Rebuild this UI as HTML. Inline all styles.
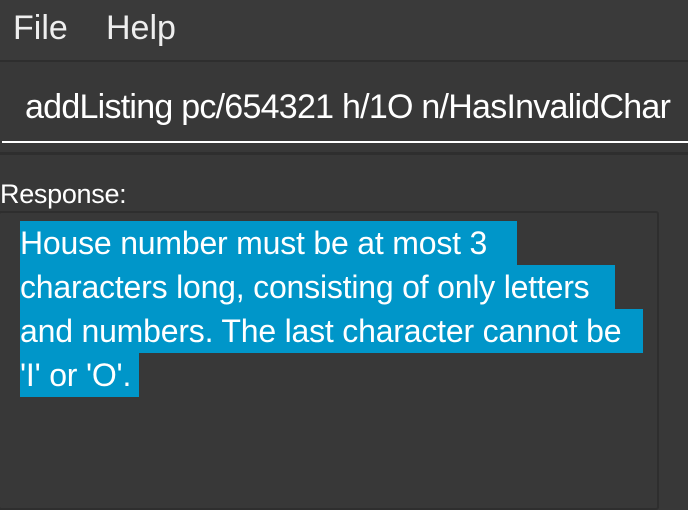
<!DOCTYPE html>
<html><head><style>
html,body{margin:0;width:688px;height:510px;overflow:hidden}
body{background:#383838;font-family:"Liberation Sans",sans-serif;color:#fff;position:relative}
.menu{position:absolute;left:0;top:0;width:688px;height:60px;background:#3a3a3a;border-bottom:2px solid #2e2e2e}
.menu span{position:absolute;top:9px;font-size:34px;color:#eee}
.cmd{position:absolute;left:0;top:62px;width:688px;height:90px;background:#383838;border-bottom:3px solid #2e2e2e}
.cmd .t{position:absolute;left:25px;top:26px;font-size:34px;letter-spacing:-0.75px;white-space:nowrap}
.cmd .u{position:absolute;left:2px;right:0;top:79px;height:2px;background:#fff}
.lab{position:absolute;left:0;top:179px;font-size:27px;letter-spacing:-0.3px}
.box{position:absolute;left:-2px;top:211px;width:657px;height:295px;border:2px solid #2e2e2e;border-radius:3px;background:#383838}
.l{position:absolute;left:20px;height:44px;background:#0096c9;font-size:32px;line-height:44px;white-space:nowrap;overflow:hidden;letter-spacing:-0.2px}
</style></head><body>
<div class="menu"><span style="left:13px">File</span><span style="left:106px">Help</span></div>
<div class="cmd"><div class="t">addListing pc/654321 h/1O n/HasInvalidChar</div><div class="u"></div></div>
<div class="lab">Response:</div>
<div class="box"></div>
<div class="l" style="top:221px;width:497px">House number must be at most 3</div>
<div class="l" style="top:265px;width:595px">characters long, consisting of only letters</div>
<div class="l" style="top:309px;width:623px">and numbers. The last character cannot be</div>
<div class="l" style="top:353px;width:119px">'I' or 'O'.</div>
</body></html>
